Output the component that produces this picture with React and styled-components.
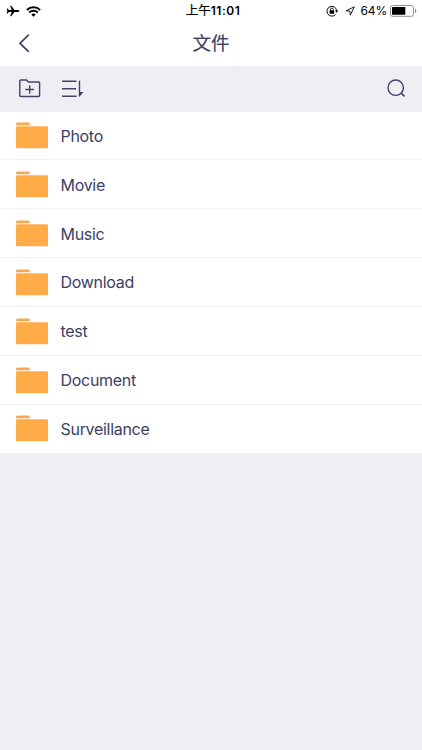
import React from 'react';
import styled, { createGlobalStyle } from 'styled-components';

const folders = ['Photo', 'Movie', 'Music', 'Download', 'test', 'Document', 'Surveillance'];

const App = () => {
  return (
    <Container>
      <GlobalStyle />
      <StatusBar>
        <StatusGroup $gap="6px">
          <PlaneIcon />
          <WifiIcon />
        </StatusGroup>
        <Clock>
          上午<ClockDigits>11:01</ClockDigits>
        </Clock>
        <StatusGroup $gap="6px" $end>
          <LockIcon />
          <LocationIcon />
          <Battery>
            <BatteryText>64%</BatteryText>
            <BatteryIcon />
          </Battery>
        </StatusGroup>
      </StatusBar>

      <Header>
        <IconButton aria-label="返回">
          <BackIcon />
        </IconButton>
        <Title>文件</Title>
      </Header>

      <Toolbar>
        <IconButton>
          <NewFolderIcon />
        </IconButton>
        <IconButton>
          <SortIcon />
        </IconButton>
        <Spacer />
        <IconButton>
          <SearchIcon />
        </IconButton>
      </Toolbar>

      <FileList>
        {folders.map((name) => (
          <FileRow key={name}>
            <FolderIcon />
            <FileName>{name}</FileName>
          </FileRow>
        ))}
      </FileList>
    </Container>
  );
};

const PlaneIcon = () => (
  <svg width="14" height="12" viewBox="0 0 14 12" fill="#000">
    <path d="M13.4 6c0 .5-.8.9-1.7.9H8.4l-3.1 4.3H4.2l1.5-4.3H2.8L1.6 8.5H.7L1.3 6 .7 3.5h.9l1.2 1.6h2.9L4.2.8h1.1l3.1 4.3h3.3c.9 0 1.7.4 1.7.9z" />
  </svg>
);

const WifiIcon = () => (
  <svg width="15" height="11" viewBox="0 0 15 11" fill="none" stroke="#000" strokeWidth="1.9">
    <path d="M.9 4a9.4 9.4 0 0 1 13.2 0" />
    <path d="M3.2 6.5a6.2 6.2 0 0 1 8.6 0" />
    <path d="M7.5 10.7L5.3 8.5a3.1 3.1 0 0 1 4.4 0z" fill="#000" stroke="none" />
  </svg>
);

const LockIcon = () => (
  <svg width="13" height="12" viewBox="0 0 13 12" fill="none" stroke="#000">
    <path d="M9.4 9.6A4.9 4.9 0 1 1 10.7 5.6" strokeWidth="1" />
    <path d="M8.9 5.4h3.5l-1.7 2.3z" fill="#000" stroke="none" />
    <rect x="3.6" y="5.3" width="4.5" height="3.5" rx=".4" fill="#000" stroke="none" />
    <path d="M4.5 5.5V4.4a1.35 1.35 0 0 1 2.7 0v1.1" strokeWidth=".9" />
  </svg>
);

const LocationIcon = () => (
  <svg width="10" height="10" viewBox="0 0 10 10" fill="none" stroke="#000" strokeWidth=".9">
    <path d="M9.3 .8L1 4.8l3.8.4.5 4z" strokeLinejoin="round" />
  </svg>
);

const BatteryIcon = () => (
  <svg width="27" height="12" viewBox="0 0 27 12">
    <rect x=".5" y=".5" width="23" height="10.8" rx="2" fill="none" stroke="#777" strokeWidth=".8" />
    <rect x="2" y="2" width="13.3" height="7.8" rx=".4" fill="#000" />
    <path d="M25 4v4c.9-.3 1.3-1 1.3-2S25.9 4.3 25 4z" fill="#888" />
  </svg>
);

const BackIcon = () => (
  <svg width="12" height="20" viewBox="0 0 12 20" fill="none" stroke="#3b4065" strokeWidth="1.7">
    <path d="M10.3 1.2L2 9.3l8.3 8" strokeLinecap="round" strokeLinejoin="round" />
  </svg>
);

const NewFolderIcon = () => (
  <svg width="22" height="19" viewBox="0 0 22 19" fill="none" stroke="#3f4469" strokeWidth="1.4">
    <path d="M.8 16.5V1.9Q.8 1 1.7 1h5.8l2 2h10.1q1 0 1 1V16.5q0 1-1 1H1.8q-1 0-1-1z" strokeLinejoin="round" />
    <path d="M10.7 6.2v8.6M6.4 10.5h8.6" />
  </svg>
);

const SortIcon = () => (
  <svg width="22" height="18" viewBox="0 0 22 18" fill="none" stroke="#3f4469" strokeWidth="1.4">
    <path d="M0 1.2h14.5M0 8.7h14M0 16.2h14.5M17.5 .8v15.5" />
    <path d="M17.2 12h4.4l-4.4 5z" fill="#3f4469" stroke="none" />
  </svg>
);

const SearchIcon = () => (
  <svg width="19" height="19" viewBox="0 0 19 19" fill="none" stroke="#3f4469" strokeWidth="1.4">
    <circle cx="8.7" cy="8.7" r="7.7" />
    <path d="M14 14l3.5 3.3" strokeWidth="1.7" />
  </svg>
);

const FolderIcon = () => (
  <svg width="32" height="27" viewBox="0 0 32 27" fill="#ffab48">
    <path d="M0 3.2V2.2Q0 .5 1.7.5h10.6q1 0 1.5 1.2v1.5z" fill="#f6a951" />
    <rect y="4.3" width="32" height="22" rx="1.3" />
  </svg>
);

const GlobalStyle = createGlobalStyle`
  body {
    margin: 0;
    background-color: #efeef5;
  }
`;

const Container = styled.div`
  min-height: 100vh;
  font-family: Inter, 'Noto Sans CJK SC', sans-serif;
  color: #3b4065;
  background-color: #efeef5;
`;

const StatusBar = styled.div`
  display: grid;
  grid-template-columns: 1fr auto 1fr;
  align-items: center;
  height: 22px;
  padding: 0 5px 0 6px;
  color: #000;
  background-color: #fff;
`;

const StatusGroup = styled.div`
  display: flex;
  align-items: center;
  justify-content: ${({ $end }) => ($end ? 'flex-end' : 'flex-start')};
  gap: ${({ $gap }) => $gap};

  svg {
    flex-shrink: 0;
  }
`;

const Clock = styled.span`
  padding-left: 3px;
  font-size: 12.5px;
  line-height: 20px;
  -webkit-text-stroke: 0.2px;
`;

const ClockDigits = styled.span`
  font-size: 12px;
  font-weight: 600;
  letter-spacing: 0.5px;
  -webkit-text-stroke: 0;
`;

const Battery = styled.div`
  display: flex;
  align-items: center;
  gap: 3px;
`;

const BatteryText = styled.span`
  font-size: 12px;
  line-height: 20px;
  letter-spacing: -0.2px;
`;

const Header = styled.header`
  display: grid;
  grid-template-columns: 60px 1fr 60px;
  align-items: center;
  height: 44px;
  background-color: #fff;

  button {
    margin-left: 18px;
  }
`;

const Title = styled.h1`
  margin: 0;
  padding-bottom: 2px;
  font-size: 18.5px;
  line-height: 24px;
  font-weight: 400;
  text-align: center;
  -webkit-text-stroke: 0.2px;
`;

const Toolbar = styled.div`
  display: flex;
  align-items: center;
  gap: 21px;
  box-sizing: border-box;
  height: 45.5px;
  padding: 0 16px 0 19px;
`;

const Spacer = styled.div`
  flex: 1;
`;

const IconButton = styled.button`
  display: flex;
  justify-self: start;
  padding: 0;
  border: 0;
  color: inherit;
  background: none;
`;

const FileList = styled.ul`
  margin: 0;
  padding: 0;
  list-style: none;
  background-color: #fff;
`;

const FileRow = styled.li`
  display: flex;
  align-items: center;
  gap: 12.5px;
  box-sizing: border-box;
  height: 48.85px;
  padding: 1px 0 0 16px;
  border-bottom: 1px solid #f1f1f4;

  &:last-child {
    border-bottom-color: #fff;
  }
`;

const FileName = styled.span`
  font-size: 16px;
  line-height: 24px;
  letter-spacing: -0.3px;
`;

export default App;
